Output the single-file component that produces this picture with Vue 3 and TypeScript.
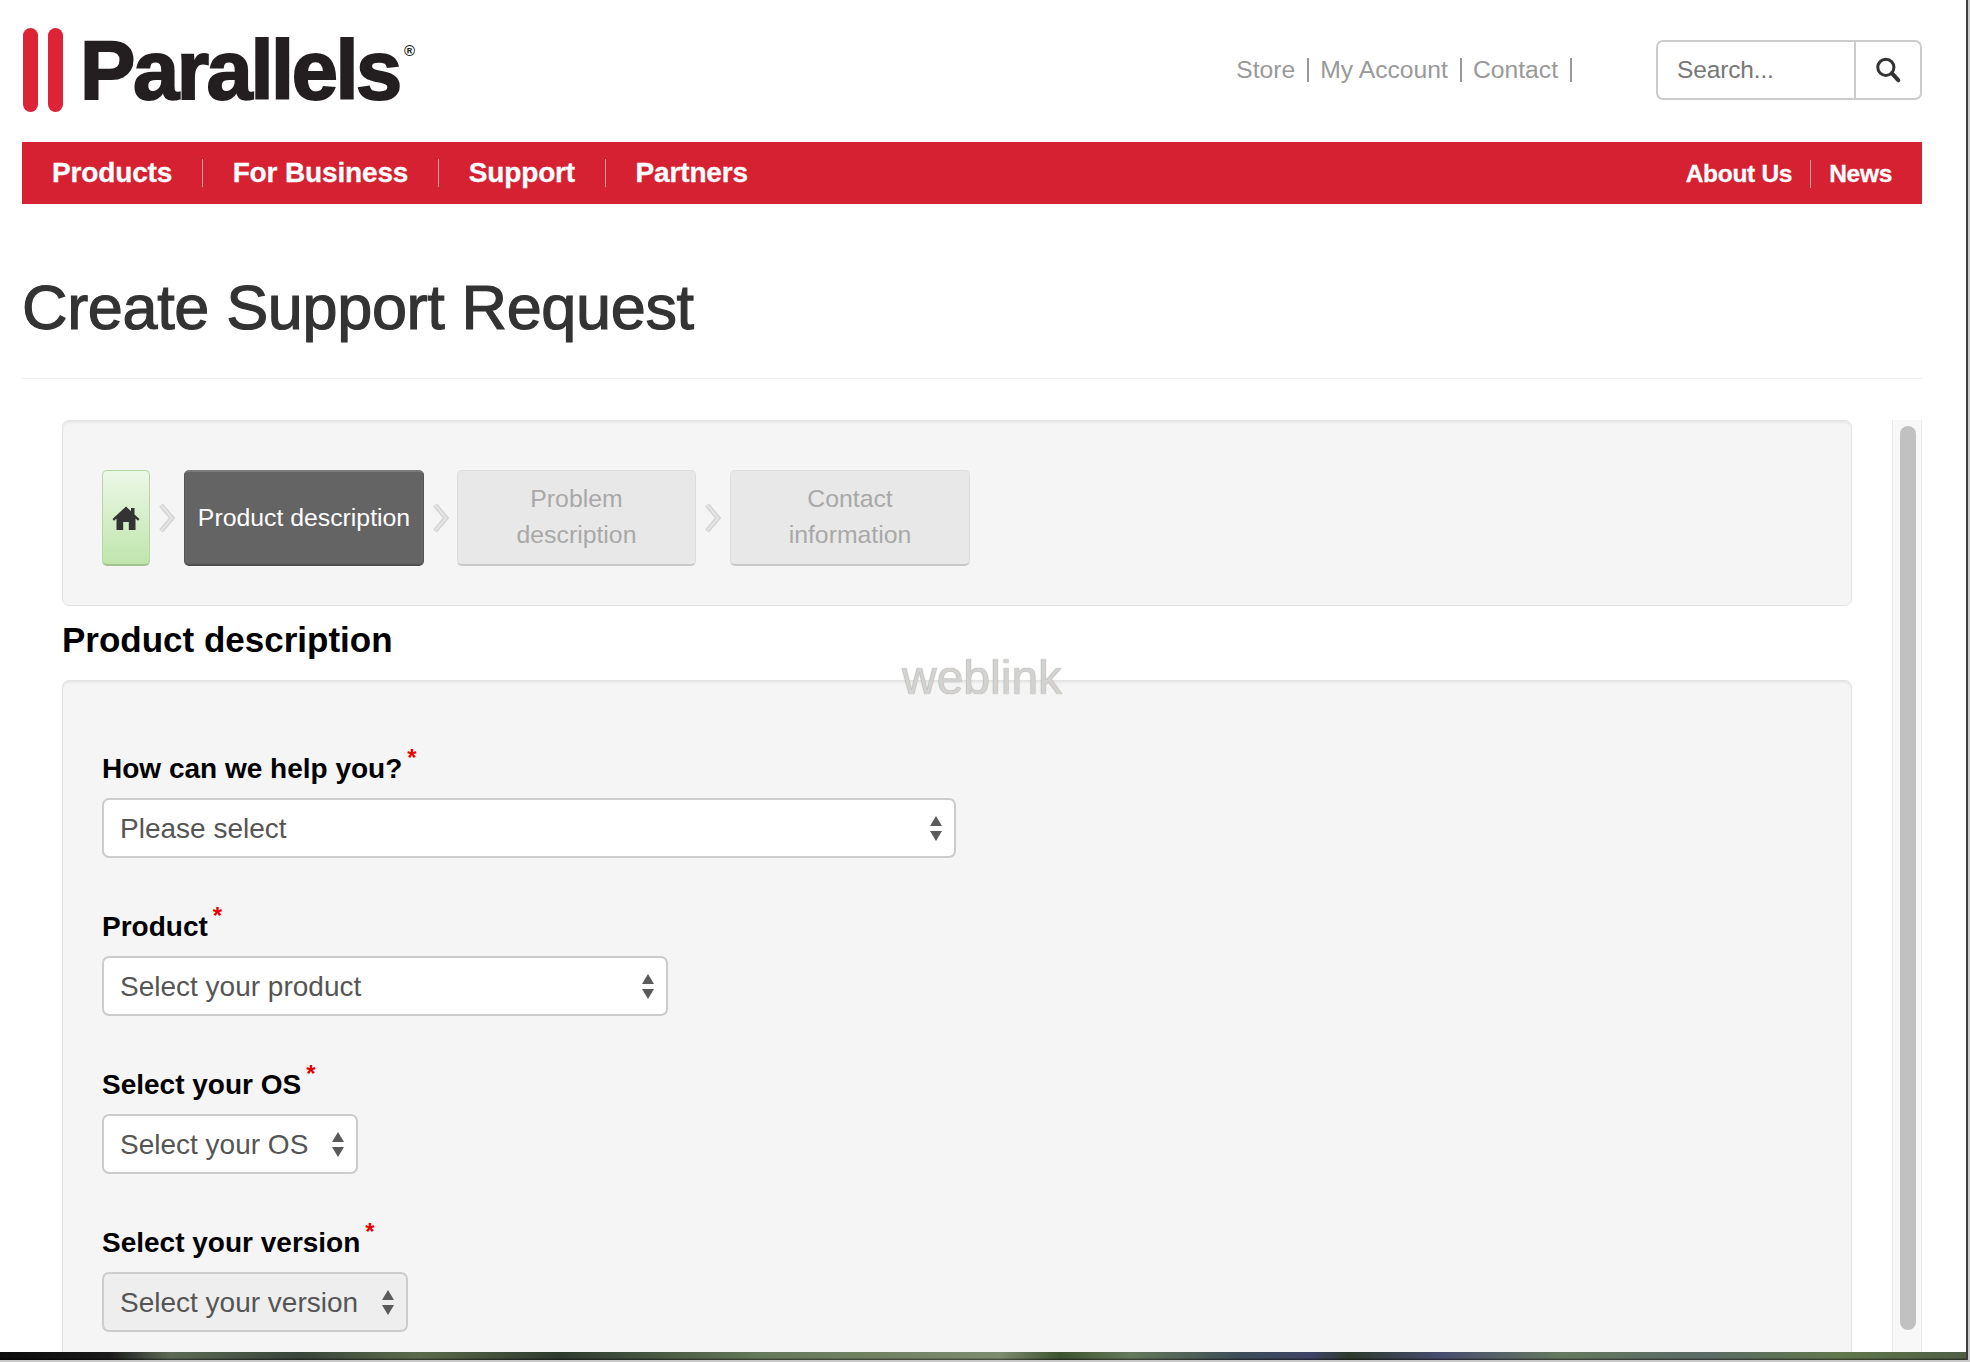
<script setup lang="ts">
interface Field {
  label: string
  value: string
  cls: string
}

const mainLinks: string[] = ['Products', 'For Business', 'Support', 'Partners']
const sideLinks: string[] = ['About Us', 'News']
const topLinks: string[] = ['Store', 'My Account', 'Contact']

const fields: Field[] = [
  { label: 'How can we help you?', value: 'Please select', cls: 'w-help' },
  { label: 'Product', value: 'Select your product', cls: 'w-product' },
  { label: 'Select your OS', value: 'Select your OS', cls: 'w-os' },
  { label: 'Select your version', value: 'Select your version', cls: 'w-version' },
]
</script>

<template>
  <div class="screen">
    <div class="window">
      <div class="page">
        <header class="top">
          <div class="logo">
            <span class="bars"><i></i><i></i></span>
            <span class="word">Parallels</span>
            <span class="reg">®</span>
          </div>
          <div class="top-right">
            <nav class="top-links">
              <a v-for="l in topLinks" :key="l">{{ l }}</a>
            </nav>
            <div class="search">
              <span class="search-input">Search...</span>
              <span class="search-btn">
                <svg width="28" height="28" viewBox="0 0 26 26" fill="none" stroke="#333">
                  <circle cx="11" cy="10.5" r="7.5" stroke-width="2.8" />
                  <path d="M16.500 16l6 6.500" stroke-width="3.8" stroke-linecap="round" />
                </svg>
              </span>
            </div>
          </div>
        </header>

        <nav class="redbar">
          <div class="red-main">
            <a v-for="l in mainLinks" :key="l">{{ l }}</a>
          </div>
          <div class="red-side">
            <a v-for="l in sideLinks" :key="l">{{ l }}</a>
          </div>
        </nav>

        <h1 class="title">Create Support Request</h1>
        <div class="rule"></div>

        <div class="frame">
          <div class="column">
            <section class="well well-steps">
              <div class="steps">
                <div class="step step-home">
                  <svg width="28" height="28" viewBox="0 0 28 28" fill="#333">
                    <path d="M14 2.500L19 7.200V4h3.500v6.500L27.500 15l-1.500 1.700-2.500-2.200V26h-6.700v-8h-5.600v8H4.500V14.500L2 16.700.5 15z" />
                  </svg>
                </div>
                <span class="chev">
                  <svg width="20" height="32" viewBox="0 0 20 32" fill="none">
                    <path d="M4 3l11 13L4 29" stroke="#d4d4d4" stroke-width="5" />
                    <path d="M4 3l11 13L4 29" stroke="#e4e4e4" stroke-width="2" />
                  </svg>
                </span>
                <div class="step step-active">Product description</div>
                <span class="chev">
                  <svg width="20" height="32" viewBox="0 0 20 32" fill="none">
                    <path d="M4 3l11 13L4 29" stroke="#d4d4d4" stroke-width="5" />
                    <path d="M4 3l11 13L4 29" stroke="#e4e4e4" stroke-width="2" />
                  </svg>
                </span>
                <div class="step step-off step-2">Problem<br />description</div>
                <span class="chev">
                  <svg width="20" height="32" viewBox="0 0 20 32" fill="none">
                    <path d="M4 3l11 13L4 29" stroke="#d4d4d4" stroke-width="5" />
                    <path d="M4 3l11 13L4 29" stroke="#e4e4e4" stroke-width="2" />
                  </svg>
                </span>
                <div class="step step-off step-3">Contact<br />information</div>
              </div>
            </section>

            <h3 class="subtitle">Product description</h3>

            <section class="well well-form">
              <div v-for="f in fields" :key="f.label" class="group">
                <div class="label">{{ f.label }}<sup class="req">*</sup></div>
                <div class="select" :class="f.cls">
                  <span>{{ f.value }}</span>
                  <svg class="caret" width="14" height="25" viewBox="0 0 14 25" fill="#5a5a5a">
                    <path d="M7 0l6 10H1z" />
                    <path d="M7 25L1 15h12z" />
                  </svg>
                </div>
              </div>
            </section>
          </div>

          <div class="track"><div class="thumb"></div></div>
        </div>
      </div>
      <div class="wallpaper"></div>
    </div>

    <div class="watermark">weblink</div>
  </div>
</template>

<style>
html,
body {
  margin: 0;
  background: #fff;
}
</style>

<style scoped>
.screen {
  position: relative;
  width: 1970px;
  height: 1362px;
  overflow: hidden;
  background: #c9c9c9;
  font-family: "Liberation Sans", Arial, sans-serif;
  font-size: 24.5px;
  line-height: 35px;
  color: #333;
}

.window {
  width: 1968px;
  height: 1360px;
  display: flex;
  flex-direction: column;
  border-right: 2px solid #3d3d3d;
  box-sizing: border-box;
  background: #fff;
}

.page {
  height: 1352px;
  overflow: hidden;
  padding: 0 44px 0 22px;
}

.top {
  height: 140px;
  margin-bottom: 2px;
  display: flex;
  align-items: center;
  justify-content: space-between;
}

.logo {
  display: flex;
  align-items: center;
  height: 84px;
  position: relative;
  color: #231f20;
}

.bars {
  display: flex;
  gap: 10px;
  height: 84px;
  margin: 0 17px 0 1px;
}

.bars i {
  display: block;
  width: 15px;
  height: 84px;
  border-radius: 8px;
  background: #dc2436;
}

.word {
  font-size: 83px;
  font-weight: 700;
  line-height: 84px;
  letter-spacing: -2.400px;
  -webkit-text-stroke: 2px #231f20;
  margin-top: 1px;
}

.reg {
  font-size: 15px;
  line-height: 15px;
  font-weight: 700;
  align-self: flex-start;
  margin: 15px 0 0 4px;
}

.top-right {
  display: flex;
  align-items: center;
}

.top-links {
  display: flex;
  align-items: center;
  margin-right: 84px;
}

.top-links a {
  font-size: 24.7px;
  line-height: 24px;
  color: #999;
  padding-right: 12px;
  margin-right: 11px;
  border-right: 2px solid #999;
}

.top-links a:last-child {
  margin-right: 0;
}

.search {
  width: 266px;
  height: 60px;
  box-sizing: border-box;
  display: flex;
  border: 2px solid #ccc;
  border-radius: 7px;
  background: #fff;
  margin-top: -1px;
}

.search-input {
  flex: 1;
  padding-left: 19px;
  line-height: 56px;
  letter-spacing: -0.15px;
  color: #777;
  border-right: 2px solid #ccc;
}

.search-btn {
  width: 64px;
  display: flex;
  align-items: center;
  justify-content: center;
}

.redbar {
  height: 62px;
  background: #d52131;
  display: flex;
  align-items: center;
  justify-content: space-between;
  color: #fff;
  font-weight: 700;
  -webkit-text-stroke: 0.3px #fff;
}

.red-main,
.red-side {
  display: flex;
  align-items: center;
}

.red-main a {
  font-size: 28px;
  line-height: 28px;
  letter-spacing: -0.15px;
  padding: 0 29.500px 0 30px;
  border-right: 1px solid rgba(255, 255, 255, 0.55);
}

.red-side a {
  font-size: 24.500px;
  line-height: 28px;
  letter-spacing: -0.3px;
  padding: 0 18px 0 18px;
  border-right: 1px solid rgba(255, 255, 255, 0.55);
  margin-top: 2px;
}

.red-main a:last-child,
.red-side a:last-child {
  border-right: 0;
}

.red-side a:last-child {
  padding-right: 30px;
}

.title {
  margin: 69px 0 0;
  padding-bottom: 36px;
  font-size: 63px;
  line-height: 69px;
  font-weight: 400;
  letter-spacing: -0.35px;
  color: #333;
  -webkit-text-stroke: 1.2px #333;
}

.rule {
  height: 1px;
  background: #eee;
}

.frame {
  margin-top: 41px;
  padding-left: 40px;
  display: flex;
  align-items: flex-start;
}

.column {
  width: 1790px;
  flex: none;
}

.well {
  box-sizing: border-box;
  border: 1px solid #e3e3e3;
  border-radius: 7px;
  background: #f5f5f5;
  box-shadow: inset 0 2px 2px rgba(0, 0, 0, 0.05);
}

.well-steps {
  height: 186px;
  padding: 49px 39px 0;
}

.steps {
  display: flex;
  align-items: stretch;
  height: 96px;
  font-size: 24.8px;
  line-height: 36px;
}

.step {
  box-sizing: border-box;
  border-radius: 5px;
  display: flex;
  align-items: center;
  justify-content: center;
  text-align: center;
}

.step-home {
  width: 48px;
  background: linear-gradient(#ecf8e6, #bfe5ad);
  border: 1px solid #b5d6a5;
  border-bottom: 2px solid #9fc48f;
}

.step-active {
  width: 240px;
  background: #646464;
  color: #fff;
  border: 1px solid #555;
  border-top: 2px solid #7a7a7a;
  border-bottom: 2px solid #4e4e4e;
}

.step-off {
  background: #e8e8e8;
  color: #a8a8a8;
  border: 1px solid #ddd;
  border-bottom: 2px solid #c8c8c8;
  padding-bottom: 1px;
}

.step-2 {
  width: 239px;
  margin-left: -1px;
}

.step-3 {
  width: 240px;
}

.chev {
  width: 34px;
  display: flex;
  align-items: center;
  justify-content: center;
}

.subtitle {
  margin: 15px 0 0;
  height: 59px;
  font-size: 35px;
  line-height: 38px;
  font-weight: 700;
  color: #000;
}

.well-form {
  height: 700px;
  padding: 69px 39px 0;
}

.group {
  margin-bottom: 50px;
}

.label {
  height: 35px;
  margin-bottom: 13px;
  font-size: 28px;
  line-height: 37px;
  font-weight: 700;
  color: #000;
  white-space: nowrap;
}

.req {
  color: #e60000;
  font-size: 24px;
  line-height: 0;
  margin-left: 5px;
  position: relative;
  top: -2px;
  vertical-align: super;
}

.select {
  box-sizing: border-box;
  height: 60px;
  border: 2px solid #ccc;
  border-radius: 7px;
  background: #fff;
  color: #555;
  font-size: 28px;
  padding: 0 11px 0 16px;
  display: flex;
  align-items: center;
  justify-content: space-between;
  white-space: nowrap;
}

.w-help {
  width: 854px;
}

.w-product {
  width: 566px;
}

.w-os {
  width: 256px;
}

.w-version {
  width: 306px;
  background: #eee;
}

.caret {
  flex: none;
}

.track {
  margin-left: 40px;
  width: 30px;
  height: 932px;
  box-sizing: border-box;
  padding: 6px 6px 0 7px;
  background: #f8f8f8;
  border-left: 1px solid #eaeaea;
  border-right: 1px solid #eaeaea;
  flex: none;
}

.thumb {
  width: 16px;
  height: 904px;
  border-radius: 8px;
  background: #c1c1c1;
}

.wallpaper {
  height: 8px;
  flex: none;
  background:
    linear-gradient(to bottom, rgba(0, 0, 0, 0) 70%, rgba(0, 0, 0, 0.55) 100%),
    linear-gradient(
      to right,
      #0c0c0c 0,
      #1a1a1a 110px,
      #5d6a55 170px,
      #39443a 300px,
      #5a6b4c 420px,
      #2c3a2e 560px,
      #66795a 760px,
      #7d8b70 1000px,
      #3c5230 1060px,
      #66785b 1130px,
      #3d4c57 1240px,
      #3e4466 1310px,
      #2d3a2d 1350px,
      #464c6e 1440px,
      #66785f 1560px,
      #5b6b66 1700px,
      #62774d 1840px,
      #4d5d45 1968px
    );
}

.watermark {
  position: absolute;
  left: 902px;
  top: 648px;
  font-size: 48px;
  line-height: 60px;
  color: #d4d2d0;
  text-shadow: 0 0 1px #858585;
}
</style>
